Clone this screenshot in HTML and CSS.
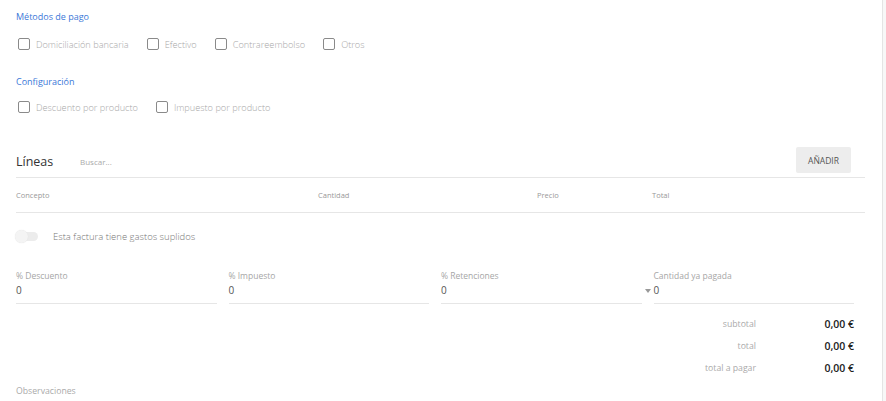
FILE: index.html
```html
<!DOCTYPE html>
<html lang="es">
<head>
  <meta charset="UTF-8" />
  <title>Factura</title>
  <link rel="stylesheet" href="styles.css">
</head>
<body>
  <div class="page">
    <main class="form">
      <section class="group">
        <h3 class="group-title">Métodos de pago</h3>
        <div class="checks">
          <label class="check"><span class="box"></span>Domiciliación bancaria</label>
          <label class="check"><span class="box"></span>Efectivo</label>
          <label class="check"><span class="box"></span>Contrareembolso</label>
          <label class="check"><span class="box"></span>Otros</label>
        </div>
      </section>
      <section class="group group-config">
        <h3 class="group-title">Configuración</h3>
        <div class="checks">
          <label class="check"><span class="box"></span>Descuento por producto</label>
          <label class="check"><span class="box"></span>Impuesto por producto</label>
        </div>
      </section>

      <div class="lines-head">
        <h2>Líneas</h2>
        <span class="search">Buscar...</span>
        <button class="btn">AÑADIR</button>
      </div>
      <div class="lines-table">
        <span>Concepto</span>
        <span>Cantidad</span>
        <span>Precio</span>
        <span>Total</span>
      </div>

      <div class="toggle-row">
        <span class="toggle"><span class="knob"></span></span>
        <span>Esta factura tiene gastos suplidos</span>
      </div>

      <div class="fields">
        <div class="field">
          <label>% Descuento</label>
          <div class="value">0</div>
        </div>
        <div class="field">
          <label>% Impuesto</label>
          <div class="value">0</div>
        </div>
        <div class="field">
          <label>% Retenciones</label>
          <div class="value">0<span class="caret"></span></div>
        </div>
        <div class="field">
          <label>Cantidad ya pagada</label>
          <div class="value">0</div>
        </div>
      </div>

      <div class="totals">
        <div class="total-row"><span class="t-label">subtotal</span><span class="t-value">0,00 €</span></div>
        <div class="total-row"><span class="t-label">total</span><span class="t-value">0,00 €</span></div>
        <div class="total-row"><span class="t-label">total a pagar</span><span class="t-value">0,00 €</span></div>
      </div>

      <div class="notes">Observaciones</div>
    </main>
    <div class="scrollbar"></div>
  </div>
</body>
</html>
```

FILE: styles.css
```css
body {
  margin: 0;
  font-family: "Open Sans", "Noto Sans", sans-serif;
  background-color: #fff;
  color: #333;
  overflow: hidden;
}
.page {
  display: flex;
  height: 401px;
}
.form {
  flex: 1;
  padding: 10px 0 0 16px;
}
.scrollbar {
  width: 3px;
  border-left: 1px solid #e4e4e4;
  background-color: #f7f7f7;
}
.group-title {
  margin: 0;
  font-size: 9px;
  font-weight: 400;
  line-height: 14px;
  color: #3b78d8;
}
.checks {
  display: flex;
  gap: 16px;
  margin-top: 13px;
  height: 14px;
}
.check {
  display: flex;
  align-items: center;
  font-size: 9.2px;
  font-weight: 300;
  color: #a8a8a8;
}
.box {
  width: 10px;
  height: 10px;
  border: 1px solid #8a8a8a;
  border-radius: 2px;
  margin: 0 6px 0 2px;
}
.group-config {
  margin-top: 24px;
}
.group-config .checks {
  margin-top: 11px;
}
.lines-head {
  display: flex;
  align-items: center;
  margin-top: 33px;
  padding-right: 31px;
  height: 26px;
}
.lines-head h2 {
  margin: 2px 0 0;
  font-size: 12.5px;
  font-weight: 400;
  color: #333;
  width: 64px;
}
.search {
  flex: 1;
  margin-top: 2px;
  font-size: 8px;
  color: #aaa;
}
.btn {
  font-family: inherit;
  font-size: 8.5px;
  color: #555;
  background-color: #ededed;
  border: none;
  border-radius: 2px;
  width: 55px;
  height: 26px;
  padding: 0;
}
.lines-table {
  display: grid;
  grid-template-columns: 302px 219px 115px 1fr;
  align-items: center;
  margin: 4px 17px 0 0;
  height: 34px;
  border-top: 1px solid #e6e6e6;
  border-bottom: 1px solid #e6e6e6;
  font-size: 7.5px;
  color: #999;
}
.toggle-row {
  display: flex;
  align-items: center;
  margin-top: 16px;
  height: 14px;
  font-size: 9.5px;
  font-weight: 300;
  color: #777;
}
.toggle {
  position: relative;
  width: 22px;
  height: 9px;
  border-radius: 5px;
  background-color: #ececec;
  margin-right: 15px;
}
.knob {
  position: absolute;
  left: -1px;
  top: -2px;
  width: 13px;
  height: 13px;
  border-radius: 50%;
  background-color: #f4f4f4;
  box-shadow: 0 0 1px #ddd;
}
.fields {
  display: grid;
  grid-template-columns: repeat(4, 1fr);
  gap: 12px;
  margin: 26px 28px 0 0;
}
.field label {
  display: block;
  font-size: 8.5px;
  color: #a6a6a6;
  line-height: 13px;
}
.field .value {
  position: relative;
  font-size: 10px;
  color: #555;
  line-height: 16px;
  padding-bottom: 5px;
  border-bottom: 1px solid #e6e6e6;
}
.caret {
  position: absolute;
  right: -9px;
  top: 7px;
  border-left: 3px solid transparent;
  border-right: 3px solid transparent;
  border-top: 4px solid #999;
}
.totals {
  margin: 9px 28px 0 0;
}
.total-row {
  display: flex;
  justify-content: flex-end;
  align-items: center;
  height: 22px;
}
.t-label {
  font-size: 8.7px;
  color: #aaa;
  text-align: right;
}
.t-value {
  width: 98px;
  text-align: right;
  font-size: 10.5px;
  font-weight: 600;
  color: #222;
}
.notes {
  margin-top: 6px;
  font-size: 8.7px;
  color: #aaa;
}
```
